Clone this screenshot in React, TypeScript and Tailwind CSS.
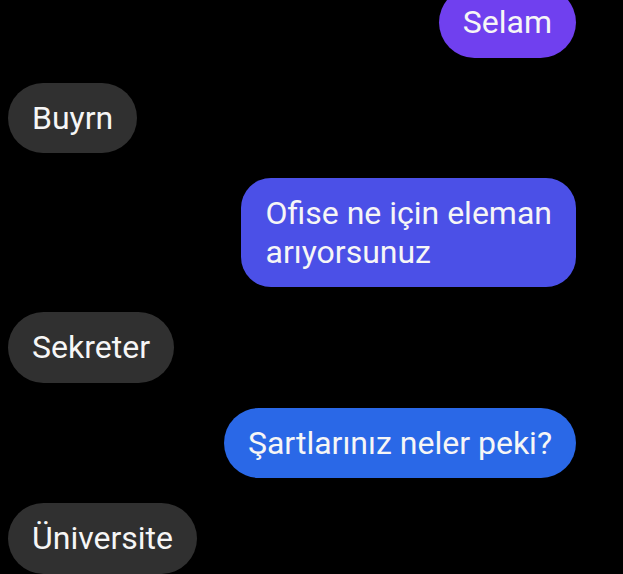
type Msg = {
  lines: string[]
  mine: boolean
  color?: string
}

const messages: Msg[] = [
  { lines: ["Selam"], mine: true, color: "bg-[#7040ef]" },
  { lines: ["Buyrn"], mine: false },
  { lines: ["Ofise ne için eleman", "arıyorsunuz"], mine: true, color: "bg-[#4b50e7]" },
  { lines: ["Sekreter"], mine: false },
  { lines: ["Şartlarınız neler peki?"], mine: true, color: "bg-[#2a68e7]" },
  { lines: ["Üniversite"], mine: false },
]

export default function App() {
  return (
    <div className="h-[574px] w-[623px] overflow-hidden bg-black font-['Roboto',sans-serif]">
      <div className="-mt-[13px] flex flex-col gap-[25px] pl-[8px] pr-[47px]">
        {messages.map((m, i) => (
          <div key={i} className={m.mine ? "flex justify-end" : "flex justify-start"}>
            <div
              className={`max-w-[420px] whitespace-nowrap px-[24px] py-[16px] text-[32px] leading-[38.5px] text-[#f6f6f6] ${
                m.mine ? m.color : "bg-[#303030]"
              } ${m.lines.length > 1 ? "rounded-[30px]" : "rounded-full"}`}
            >
              {m.lines.map((l, j) => (
                <div key={j}>{l}</div>
              ))}
            </div>
          </div>
        ))}
      </div>
    </div>
  )
}
